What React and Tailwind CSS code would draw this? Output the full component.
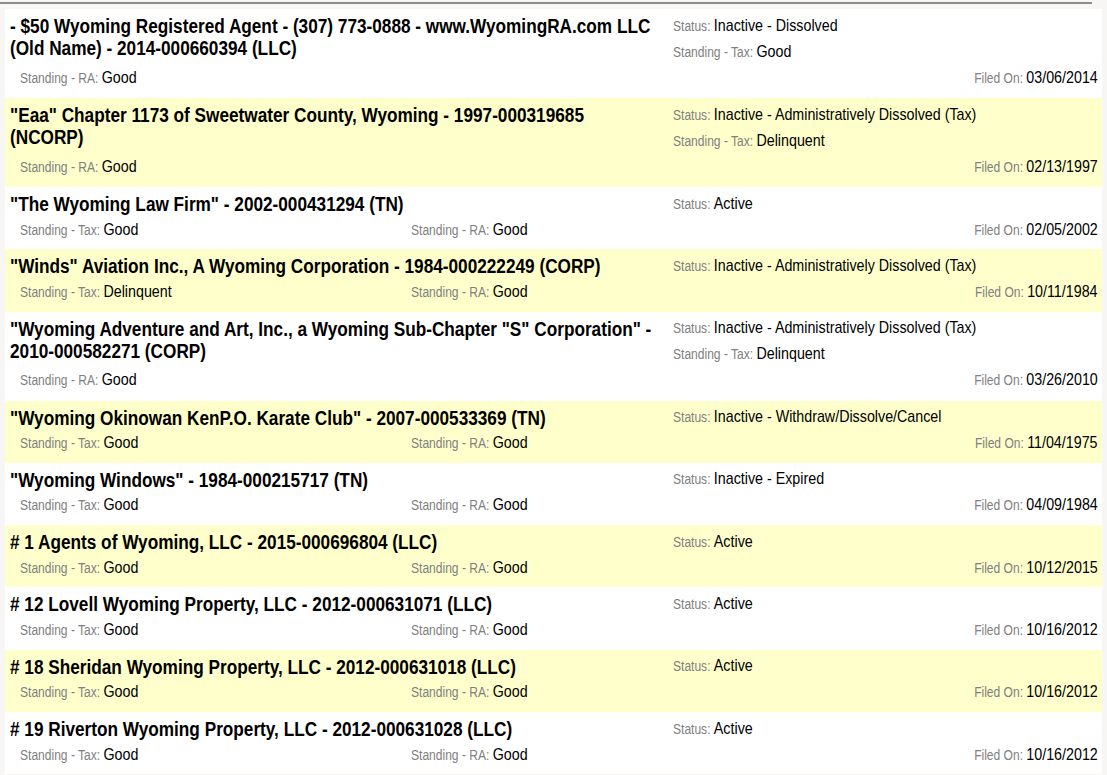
import React from "react";

const rows = [
  { title: '- $50 Wyoming Registered Agent - (307) 773-0888 - www.WyomingRA.com LLC (Old Name) - 2014-000660394 (LLC)', status: "Inactive - Dissolved", tax: "Good", ra: "Good", filed: "03/06/2014", two: true },
  { title: '"Eaa" Chapter 1173 of Sweetwater County, Wyoming - 1997-000319685 (NCORP)', status: "Inactive - Administratively Dissolved (Tax)", tax: "Delinquent", ra: "Good", filed: "02/13/1997", two: true },
  { title: '"The Wyoming Law Firm" - 2002-000431294 (TN)', status: "Active", tax: "Good", ra: "Good", filed: "02/05/2002" },
  { title: '"Winds" Aviation Inc., A Wyoming Corporation - 1984-000222249 (CORP)', status: "Inactive - Administratively Dissolved (Tax)", tax: "Delinquent", ra: "Good", filed: "10/11/1984" },
  { title: '"Wyoming Adventure and Art, Inc., a Wyoming Sub-Chapter "S" Corporation" - 2010-000582271 (CORP)', status: "Inactive - Administratively Dissolved (Tax)", tax: "Delinquent", ra: "Good", filed: "03/26/2010", two: true },
  { title: '"Wyoming Okinowan KenP.O. Karate Club" - 2007-000533369 (TN)', status: "Inactive - Withdraw/Dissolve/Cancel", tax: "Good", ra: "Good", filed: "11/04/1975" },
  { title: '"Wyoming Windows" - 1984-000215717 (TN)', status: "Inactive - Expired", tax: "Good", ra: "Good", filed: "04/09/1984" },
  { title: "# 1 Agents of Wyoming, LLC - 2015-000696804 (LLC)", status: "Active", tax: "Good", ra: "Good", filed: "10/12/2015" },
  { title: "# 12 Lovell Wyoming Property, LLC - 2012-000631071 (LLC)", status: "Active", tax: "Good", ra: "Good", filed: "10/16/2012" },
  { title: "# 18 Sheridan Wyoming Property, LLC - 2012-000631018 (LLC)", status: "Active", tax: "Good", ra: "Good", filed: "10/16/2012" },
  { title: "# 19 Riverton Wyoming Property, LLC - 2012-000631028 (LLC)", status: "Active", tax: "Good", ra: "Good", filed: "10/16/2012" },
];

function Field({ label, value, right }) {
  return (
    <span
      className={`inline-block whitespace-nowrap scale-x-[0.86] ${right ? "origin-right" : "origin-left"}`}
    >
      <span className="text-[14px] text-[#808080]">{label}: </span>
      <span className="text-[16.6px] text-black">{value}</span>
    </span>
  );
}

function Row({ r, i }) {
  const bg = i % 2 === 1 ? "bg-[#ffffcc]" : "bg-white";
  return (
    <div className={`${bg} flex pl-[5px] pr-[4px] pt-[4px] ${r.two ? "pb-[7px]" : "pb-[6.3px]"}`}>
      <div className="w-[663px] shrink-0 flex flex-col">
        <div className="mt-[2px] w-[758px] origin-left scale-x-[0.86] text-[20px] leading-[22px] font-bold text-black">
          {r.title}
        </div>
        <div className="mt-auto h-[26px] flex items-center pl-[10px]">
          {r.two ? (
            <Field label="Standing - RA" value={r.ra} />
          ) : (
            <>
              <div className="w-[391px] shrink-0">
                <Field label="Standing - Tax" value={r.tax} />
              </div>
              <Field label="Standing - RA" value={r.ra} />
            </>
          )}
        </div>
      </div>
      <div className="flex-1 min-w-0 flex flex-col">
        <div className="h-[26px] flex items-center">
          <Field label="Status" value={r.status} />
        </div>
        {r.two && (
          <div className="h-[26px] flex items-center">
            <Field label="Standing - Tax" value={r.tax} />
          </div>
        )}
        <div className="h-[26px] flex items-center justify-end">
          <Field label="Filed On" value={r.filed} right />
        </div>
      </div>
    </div>
  );
}

export default function App() {
  return (
    <div
      className="h-[775px] bg-[#f7f6f4] overflow-hidden"
      style={{ fontFamily: '"Liberation Sans", Arial, sans-serif' }}
    >
      <div className="pt-[2px]">
        <div className="h-[2px] w-[1092px] bg-[#8c8c8c]" />
      </div>
      <div className="ml-[5px] mr-[5px] mt-[5px]">
        {rows.map((r, i) => (
          <Row key={i} r={r} i={i} />
        ))}
      </div>
    </div>
  );
}
